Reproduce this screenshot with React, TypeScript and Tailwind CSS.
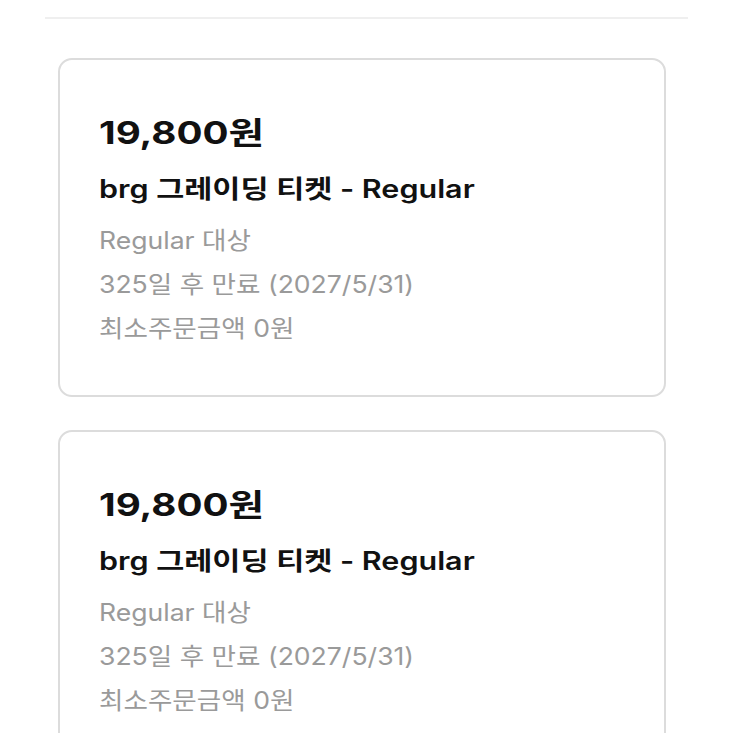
import React from "react";

const font = { fontFamily: 'Inter, "Noto Sans CJK KR", sans-serif' };

function Card() {
  return (
    <div className="rounded-[14px] border-2 border-[#dcdcdc] bg-white pl-[39px] pt-[53px] pb-[44px]">
      <div className="origin-left scale-x-[1.245] whitespace-nowrap text-[31px] leading-[40px] font-bold text-[#111]">19,800원</div>
      <div className="mt-[19px] origin-left scale-x-[1.22] whitespace-nowrap text-[25px] leading-[34px] font-semibold text-[#111]">brg 그레이딩 티켓 - Regular</div>
      <div className="mt-[13px] flex flex-col origin-left scale-x-[1.107] whitespace-nowrap text-[24px] leading-[44px] text-[#9a9a9a]">
        <div>Regular 대상</div>
        <div>325일 후 만료 (2027/5/31)</div>
        <div>최소주문금액 0원</div>
      </div>
    </div>
  );
}

export default function App() {
  return (
    <div className="w-[733px] h-[733px] overflow-hidden bg-white" style={font}>
      <div className="mx-[45px] mt-[17px] h-[2px] bg-[#efefef]" />
      <div className="ml-[58px] mr-[67px] mt-[39px] flex flex-col gap-[33px]">
        <Card />
        <Card />
      </div>
    </div>
  );
}
